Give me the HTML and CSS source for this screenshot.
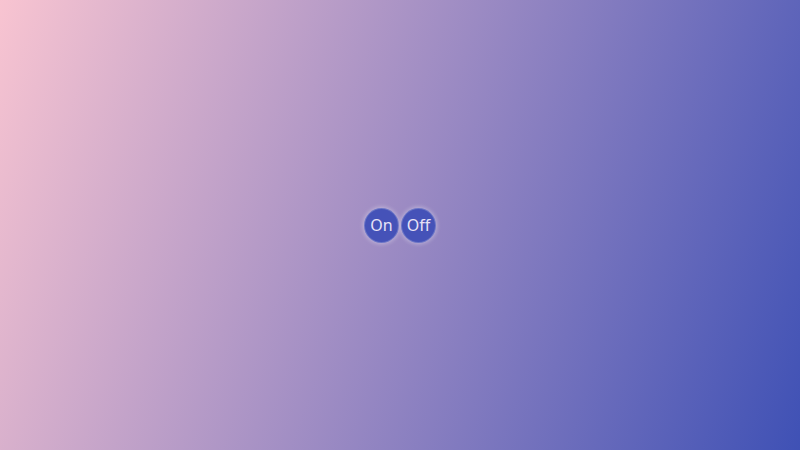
FILE: index.html
```html
<!DOCTYPE html>
<html>
<head>
<meta charset="utf-8">
<link rel="stylesheet" href="styles.css">
</head>
<body>
<div class="stage">
  <div class="toggle">
    <button class="btn">On</button>
    <button class="btn">Off</button>
  </div>
</div>
</body>
</html>
```
FILE: styles.css
```css
html, body {
  margin: 0;
  padding: 0;
  width: 800px;
  height: 450px;
}
.stage {
  width: 800px;
  height: 450px;
  background: linear-gradient(110deg, #f8c4d1, #3f51b5);
  display: flex;
  align-items: center;
  justify-content: center;
}
.toggle {
  display: flex;
  gap: 2px;
}
.btn {
  width: 35px;
  height: 35px;
  border-radius: 50%;
  border: 1px solid rgba(255,255,255,0.2);
  background: #4552b8;
  color: #e8e2f6;
  font-family: "Noto Sans", sans-serif;
  font-size: 16px;
  padding: 0;
  box-shadow: 0 0 4px 1px rgba(255,255,255,0.35);
  display: flex;
  align-items: center;
  justify-content: center;
}
```
